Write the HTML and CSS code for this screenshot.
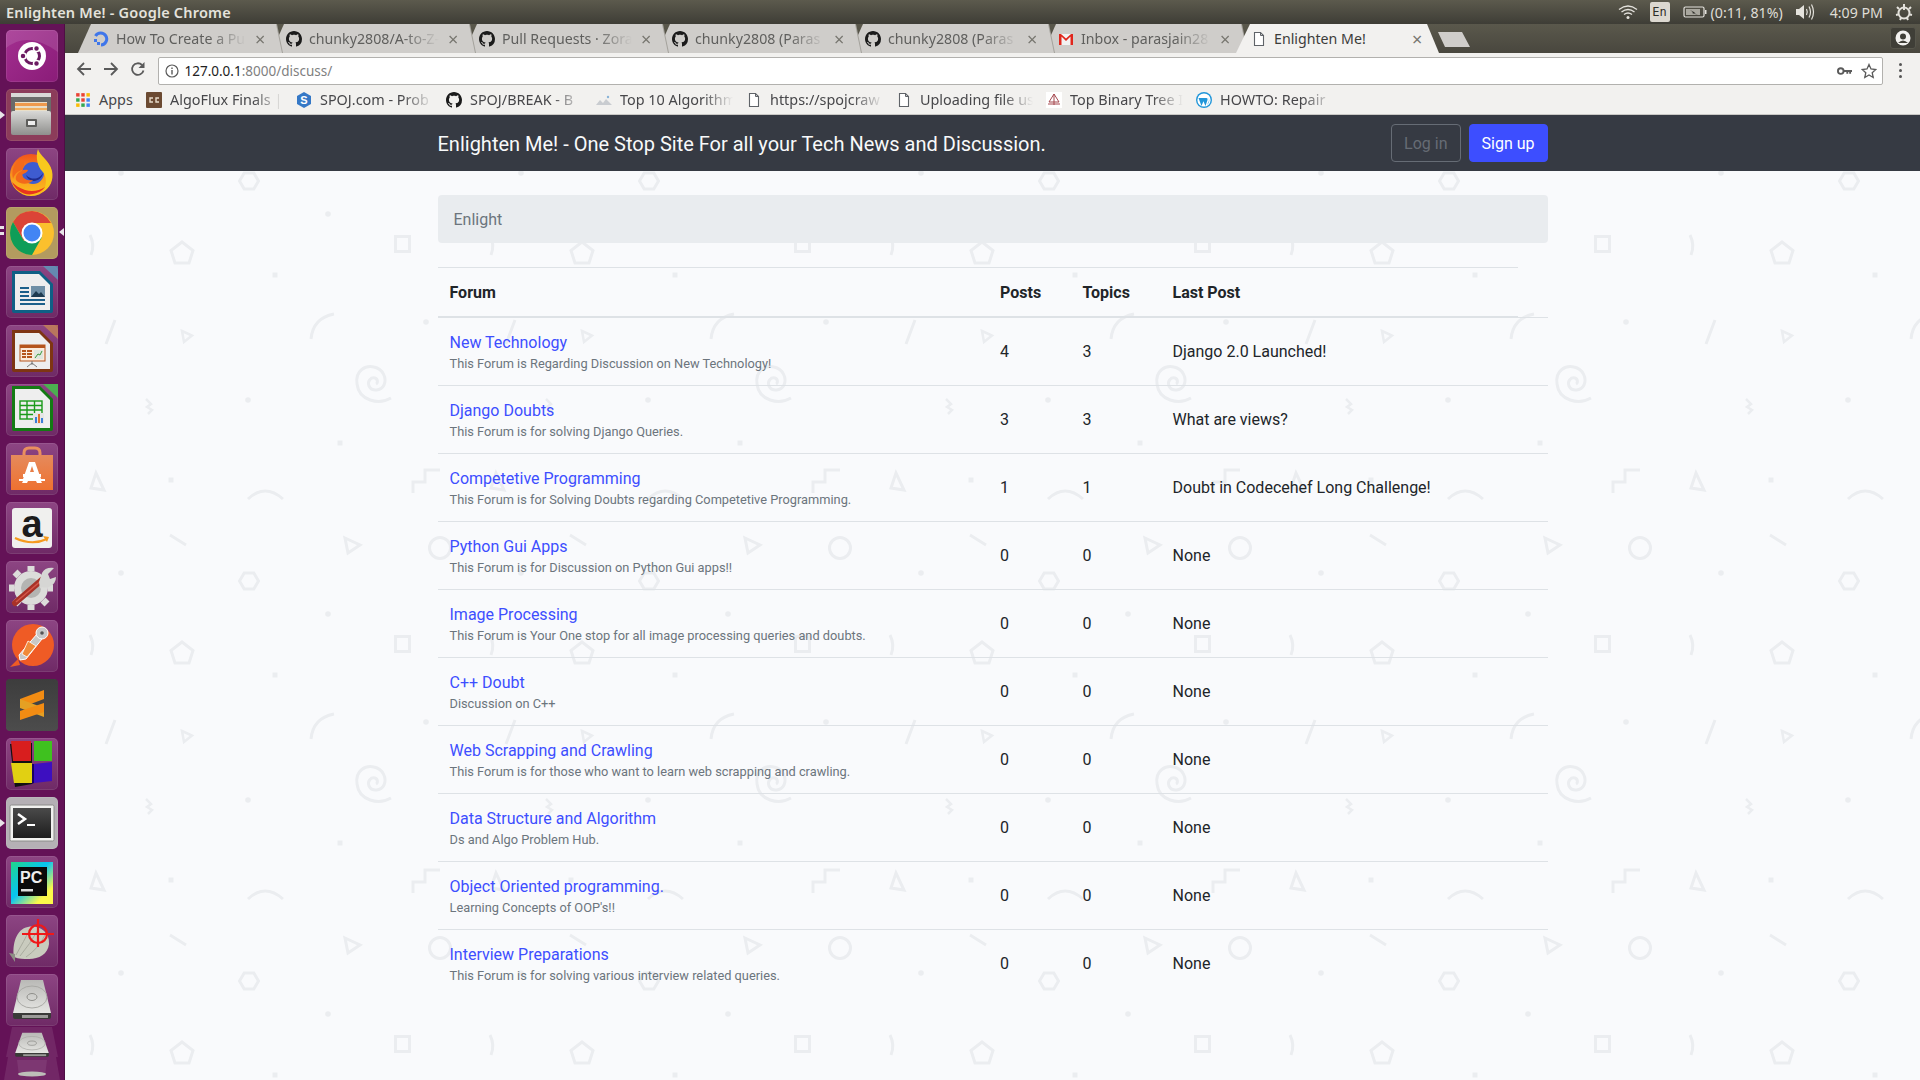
FILE: index.html
```html
<!DOCTYPE html>
<html lang="en">
<head>
<meta charset="utf-8">
<title>Enlighten Me!</title>
<link rel="stylesheet" href="styles.css">
</head>
<body>
<svg class="defs" width="0" height="0" aria-hidden="true">
  <defs>
    <symbol id="gh" viewBox="0 0 16 16"><path fill="#1b1b1b" d="M8 0C3.58 0 0 3.58 0 8c0 3.54 2.29 6.53 5.47 7.59.4.07.55-.17.55-.38 0-.19-.01-.82-.01-1.49-2.01.37-2.53-.49-2.69-.94-.09-.23-.48-.94-.82-1.13-.28-.15-.68-.52-.01-.53.63-.01 1.08.58 1.23.82.72 1.21 1.87.87 2.33.66.07-.52.28-.87.51-1.07-1.78-.2-3.64-.89-3.64-3.95 0-.87.31-1.59.82-2.15-.08-.2-.36-1.02.08-2.12 0 0 .67-.21 2.2.82.64-.18 1.32-.27 2-.27.68 0 1.36.09 2 .27 1.53-1.04 2.2-.82 2.2-.82.44 1.1.16 1.92.08 2.12.51.56.82 1.27.82 2.15 0 3.07-1.87 3.75-3.65 3.95.29.25.54.73.54 1.48 0 1.07-.01 1.93-.01 2.2 0 .21.15.46.55.38A8.013 8.013 0 0016 8c0-4.42-3.58-8-8-8z"/></symbol>
    <symbol id="doc" viewBox="0 0 16 16"><path fill="#fff" stroke="#5f6368" stroke-width="1.1" d="M3.5 1.5h6l3 3v10h-9z"/><path fill="none" stroke="#5f6368" stroke-width="1" d="M9.5 1.5v3h3"/></symbol>
    <symbol id="pic" viewBox="0 0 16 16"><path fill="#c9ccd0" d="M0 13l4-5 3 3 3-4 6 6z"/><circle cx="12" cy="5" r="1.2" fill="#8ab4d8"/></symbol>
    <symbol id="hdd" viewBox="0 0 52 52"><path fill="url(#gDisk)" d="M15 6h22l8 33H7z"/><ellipse cx="26" cy="23" rx="15" ry="11" fill="none" stroke="#a9a9a5" stroke-width="1"/><ellipse cx="26" cy="23" rx="5" ry="3.5" fill="none" stroke="#8f8f8b" stroke-width="1"/><path fill="#3a3a38" d="M7 39h38v4a2 2 0 0 1-2 2H9a2 2 0 0 1-2-2z"/><path fill="#9b9b98" d="M16 41h26v3H16z"/></symbol>
    <linearGradient id="gDisk" x1="0" y1="0" x2="0" y2="1"><stop offset="0" stop-color="#b9b9b6"/><stop offset="1" stop-color="#e6e6e3"/></linearGradient>
    <linearGradient id="gFile" x1="0" y1="0" x2="0" y2="1"><stop offset="0" stop-color="#d8d8d6"/><stop offset="1" stop-color="#8f8f8d"/></linearGradient>
    <linearGradient id="gBag" x1="0" y1="0" x2="0" y2="1"><stop offset="0" stop-color="#e58a5c"/><stop offset="1" stop-color="#ee7130"/></linearGradient>
    <linearGradient id="gPc" x1="0" y1="0" x2="1" y2="1"><stop offset="0" stop-color="#21d789"/><stop offset=".45" stop-color="#07c3f2"/><stop offset=".8" stop-color="#fcf84a"/><stop offset="1" stop-color="#fcf84a"/></linearGradient>
    <linearGradient id="gTerm" x1="0" y1="0" x2="0" y2="1"><stop offset="0" stop-color="#4a4a4a"/><stop offset="1" stop-color="#1d1d1d"/></linearGradient>
    <linearGradient id="gFox" x1="0" y1="0" x2="0" y2="1"><stop offset="0" stop-color="#f2541b"/><stop offset=".6" stop-color="#f9a01e"/><stop offset="1" stop-color="#fcc21c"/></linearGradient>
    <pattern id="doodles" patternUnits="userSpaceOnUse" x="0" y="46" width="400" height="400">
      <g transform="translate(-65 -161)" fill="none" stroke="#ebedf0" stroke-width="3">
        <g fill="#ebedf0" stroke="none">
          <circle cx="121" cy="173" r="2.8"/><circle cx="328" cy="214" r="2.8"/><circle cx="426" cy="322" r="2.8"/><circle cx="248" cy="400" r="2.8"/>
          <rect x="272.5" y="272.5" width="5" height="5"/><rect x="337.5" y="440.5" width="5" height="5"/><rect x="168.5" y="477.5" width="5" height="5"/>
        </g>
        <path d="M239.500 181l4.700-8h9.600l4.700 8-4.700 8h-9.600z"/>
        <path d="M90 235q5 10 1 20"/>
        <path d="M182 242l11 8.500-4 12.500h-14l-4-12.500z"/>
        <rect x="395.500" y="236.500" width="14" height="15"/>
        <path d="M115 320l-9 24"/>
        <path d="M182 331l10 4.500-8 6.500z" stroke-width="2.500"/>
        <path d="M311 339q2-21 23-25"/>
        <path d="M391 398c-12 7-32 3-34-14-2-14 9-19 17-17 9 2 13 11 10 18-3 6-12 7-15 1-2-5 2-9 6-8 3 1 3 5 1 6"/>
        <path d="M146 399l5 5-4 3 5 3-4 4" stroke-width="2.500"/>
        <path d="M96 473l-5 15 13 2z"/>
        <path d="M413 493v-11h12v-12h15"/>
        <path d="M248 499q17-16 35 0"/>
        <path d="M170 535l16 10"/>
        <path d="M345 538l15 7-12 8z"/>
        <circle cx="440" cy="548" r="10.500"/>
      </g>
    </pattern>
  </defs>
</svg>

<header class="panel">
  <div class="panel-title">Enlighten Me! - Google Chrome</div>
  <div class="tray">
    <svg class="tray-wifi" width="20" height="16" viewBox="0 0 20 16"><g fill="none" stroke="#e4e2dc" stroke-width="1.300"><path d="M1 5.500q9-7 18 0"/><path d="M3.500 8q6.500-5 13 0"/><path d="M6 10.500q4-3 8 0"/></g><circle cx="10" cy="13.500" r="1.500" fill="#e4e2dc"/></svg>
    <span class="tray-lang">En</span>
    <span class="tray-batt">
      <svg width="24" height="14" viewBox="0 0 24 14"><rect x="1" y="2" width="20" height="10" rx="1.500" fill="none" stroke="#e4e2dc" stroke-width="1.200"/><rect x="3" y="4" width="14" height="6" fill="#a9a79e"/><rect x="22" y="5" width="1.500" height="4" fill="#e4e2dc"/><path d="M7 5l5 2.500-1 .5 4 2-6-2 1-.8z" fill="#2f2e2a"/></svg>
      <span>(0:11, 81%)</span>
    </span>
    <svg class="tray-vol" width="20" height="18" viewBox="0 0 20 18"><path fill="#e4e2dc" d="M1 6h3l5-4v14l-5-4H1z"/><g fill="none" stroke="#e4e2dc" stroke-width="1.200"><path d="M11.500 6q1.500 3 0 6"/><path d="M14 3.500q3 5.500 0 11"/><path d="M16.500 1.500q4 7.500 0 15"/></g></svg>
    <span class="tray-time">4:09 PM</span>
    <svg class="tray-gear" width="18" height="18" viewBox="0 0 18 18"><circle cx="9" cy="10" r="5.500" fill="none" stroke="#e4e2dc" stroke-width="2"/><path stroke="#e4e2dc" stroke-width="2" d="M9 1v6M2 4l2 2M16 4l-2 2M1 12l2-.5M17 12l-2-.5M5 17l1-2M13 17l-1-2"/></svg>
  </div>
</header>

<div class="desktop">
  <nav class="launcher">
    <i class="pip pip-files"></i><i class="pip pip-chrome"></i><i class="pip pip-chrome2"></i><i class="pip pip-term"></i><i class="pip-active"></i>
    <div class="tile tile-ubuntu"><svg viewBox="0 0 52 52"><path fill="#fff" opacity=".12" d="M0 18q22-18 52 4V5a5 5 0 0 0-5-5H5a5 5 0 0 0-5 5z"/><circle cx="26" cy="26" r="14" fill="#fff"/><circle cx="26" cy="26" r="7.500" fill="none" stroke="#6b1a61" stroke-width="3"/><g fill="#6b1a61" stroke="#fff" stroke-width="1.500"><circle cx="17" cy="26" r="3"/><circle cx="30.500" cy="18.500" r="3"/><circle cx="30.500" cy="33.500" r="3"/></g></svg></div>
    <div class="tile tile-files"><svg viewBox="0 0 52 52"><rect x="5" y="4" width="40" height="20" rx="2" fill="#6b6b69"/><rect x="5" y="4" width="40" height="4" fill="#d9d9d6"/><rect x="9" y="13" width="32" height="10" fill="#e9dfc9"/><rect x="9" y="14" width="32" height="3" fill="#ee9a4d"/><rect x="9" y="19" width="32" height="2" fill="#f0b061"/><rect x="5" y="22" width="40" height="24" rx="2" fill="url(#gFile)"/><rect x="20" y="30" width="11" height="8" rx="1" fill="#5d5d5b"/><rect x="22" y="32" width="7" height="4" fill="#eee"/></svg></div>
    <div class="tile"><svg viewBox="0 0 52 52"><circle cx="25" cy="27" r="21" fill="url(#gFox)"/><circle cx="27" cy="25" r="11" fill="#3e5cd0"/><path fill="#1f2c8f" d="M20 27c6 6 14 4 17-2-1 8-13 12-17 2z"/><path fill="#f8c81e" d="M32 1c1 6 12 12 14 22 2 9-2 17-9 21 4-7 4-16-1-21-4-4-7-14-4-22z"/><path fill="#f36a1a" d="M17 11c-9 3-12 11-10 20 2-7 8-10 15-9-1 3-4 3-6 5 1 4 6 6 11 5-4 5-13 5-17 0-1-4 2-8 6-9 2-4 3-8 1-12z"/><path fill="#e8341f" d="M6 34c3 8 12 14 21 12 5-1 9-3 12-7-6 4-13 5-20 3-6-2-10-5-13-8z"/></svg></div>
    <div class="tile tile-chrome"><svg viewBox="0 0 52 52"><circle cx="26" cy="26" r="22" fill="#fbc02d"/><path fill="#db4437" d="M26 4a22 22 0 0 0-19 11l11 19 8-18h19A22 22 0 0 0 26 4z"/><path fill="#0f9d58" d="M7 15a22 22 0 0 0 19 33l10-18-18 4z"/><circle cx="26" cy="26" r="10.500" fill="#fff"/><circle cx="26" cy="26" r="8.500" fill="#4285f4"/></svg></div>
    <div class="tile"><svg viewBox="0 0 52 52"><path fill="#5b9bbd" d="M37 0h15v14z" opacity=".8"/><path fill="#0f5f85" d="M6 5h28l13 13v27a2 2 0 0 1-2 2H8a2 2 0 0 1-2-2z"/><path fill="#eee" d="M9 8h24l11 11v25H9z"/><g fill="#1b5f8a"><rect x="14" y="21" width="9" height="2"/><rect x="14" y="25" width="9" height="2"/><rect x="14" y="29" width="9" height="2"/><rect x="14" y="33" width="25" height="2"/><rect x="14" y="37" width="25" height="2"/></g><rect x="25" y="20" width="14" height="11" fill="#6f8fa6"/><path fill="#1d3a4f" d="M25 31l5-6 3 3 2-2 4 5z"/></svg></div>
    <div class="tile"><svg viewBox="0 0 52 52"><path fill="#c58355" d="M37 0h15v14z" opacity=".8"/><path fill="#7e3513" d="M6 5h28l13 13v27a2 2 0 0 1-2 2H8a2 2 0 0 1-2-2z"/><path fill="#eee" d="M9 8h24l11 11v25H9z"/><rect x="14" y="20" width="25" height="16" fill="#fbeadb" stroke="#b5541c" stroke-width="1"/><rect x="14" y="20" width="25" height="3" fill="#b5541c"/><g fill="#b5541c"><rect x="16" y="25" width="4" height="2"/><rect x="21" y="25" width="5" height="2"/><rect x="16" y="28" width="4" height="2"/><rect x="21" y="28" width="5" height="2"/><rect x="16" y="31" width="4" height="2"/><rect x="21" y="31" width="5" height="2"/></g><rect x="28" y="25" width="9" height="9" fill="#dfe6df"/><path d="M29 33l3-4 2 1 2-4" fill="none" stroke="#3c9a3c" stroke-width="1"/><path d="M26 36v4M26 38l-5 4M26 38l5 4" stroke="#777" stroke-width="1"/></svg></div>
    <div class="tile"><svg viewBox="0 0 52 52"><path fill="#4caf50" d="M37 0h15v14z"/><path fill="#147a14" d="M6 2h28l13 13v30a2 2 0 0 1-2 2H8a2 2 0 0 1-2-2z"/><path fill="#eee" d="M9 5h24l11 11v28H9z"/><g fill="none" stroke="#1a9a1a" stroke-width="1.400"><rect x="14" y="17" width="22" height="18"/><path d="M14 21.500h22M14 26h22M14 30.500h22M21 17v18M28.500 17v18"/></g><rect x="27" y="29" width="11" height="11" fill="#e5e5e5"/><rect x="29" y="33" width="2" height="6" fill="#3b7dd8"/><rect x="32" y="30" width="2" height="9" fill="#e2722c"/><rect x="35" y="34" width="2" height="5" fill="#3b7dd8"/></svg></div>
    <div class="tile"><svg viewBox="0 0 52 52"><path fill="none" stroke="#e98f5f" stroke-width="3" d="M18 15v-5q0-5 5-5h6q5 0 5 5v5"/><path fill="url(#gBag)" d="M5 12h42v35H5z"/><path fill="#fff" d="M23 19h6l6 17h4v2H13v-2h4zm3 4l-2 6h4zM17 31h18v3H17zM16 40h5l1-2h-5zM31 40h5l-1-2h-5z"/></svg></div>
    <div class="tile"><svg viewBox="0 0 52 52"><rect x="6" y="6" width="40" height="40" rx="3" fill="#f0f0ee"/><text class="amz" x="26" y="35" text-anchor="middle">a</text><path d="M9 36q17 8 32 1" fill="none" stroke="#f59a1e" stroke-width="2.200"/><path d="M37 34l6 1-2 5z" fill="#f59a1e"/></svg></div>
    <div class="tile"><svg viewBox="0 0 52 52"><circle cx="25" cy="27" r="17" fill="#dcdcda"/><circle cx="25" cy="27" r="10" fill="#b4b4b2"/><g stroke="#dcdcda" stroke-width="7"><path d="M25 5v5M25 44v5M3 27h5M42 27h5M9 11l4 4M37 39l4 4M13 39l-4 4"/></g><path d="M9 42L38 17" stroke="#a83228" stroke-width="6" stroke-linecap="round"/><path d="M10 41L36 19" stroke="#d4574a" stroke-width="1.500"/><path fill="#d6d6d4" d="M33 21l3-9q3-6 12-5l-6 6 2 5 6-2q0 7-7 10-5 1-7 0l-2 2z"/></svg></div>
    <div class="tile"><svg viewBox="0 0 52 52"><circle cx="27" cy="25" r="21" fill="#ef5b25"/><path fill="#c8c8c8" stroke="#fff" stroke-width="1" d="M31 14l5 5-16 20-6 1-1-5z"/><path fill="#f08a3a" stroke="#fff" stroke-width=".8" d="M22 21l8 5-9 11-5-3z"/><circle cx="36" cy="13" r="6" fill="#c8c8c8" stroke="#fff" stroke-width="1"/><circle cx="36" cy="13" r="1.800" fill="#555"/><path fill="#ef5b25" d="M4 47l8-8 2 6z"/></svg></div>
    <div class="tile tile-dark"><svg viewBox="0 0 52 52"><path fill="#f28c13" d="M14 20l24-9v9l-24 9z"/><path fill="#e5a023" d="M14 20l24 9v9L14 29z"/><path fill="#f28c13" d="M14 32l24-8v9l-24 8z"/></svg></div>
    <div class="tile"><svg viewBox="0 0 52 52"><path fill="#111" d="M4 6l22-1v41L9 49z"/><path fill="#d81e1e" d="M5 3h20v20H7z"/><path fill="#3fc11f" d="M28 3h18v20H28z"/><path fill="#e1d012" d="M5 25h21v20H8z"/><path fill="#3d0fc0" d="M28 26l18-2v19l-18 2z"/><path fill="#1a0066" d="M26 26l2 0v19l-2 1z"/></svg></div>
    <div class="tile tile-term"><svg viewBox="0 0 52 52"><rect x="4" y="8" width="44" height="36" rx="1.500" fill="#f1f1ef" stroke="#8c8c8a"/><rect x="7" y="11" width="38" height="30" fill="url(#gTerm)"/><path d="M12 17l7 5-7 5" fill="none" stroke="#fff" stroke-width="2.500"/><rect x="21" y="27" width="8" height="2" fill="#fff"/></svg></div>
    <div class="tile"><svg viewBox="0 0 52 52"><rect x="5" y="6" width="42" height="42" fill="url(#gPc)"/><rect x="12" y="11" width="29" height="29" fill="#0a0a0a"/><text class="pc" x="14" y="27">PC</text><rect x="15" y="33" width="12" height="2.500" fill="#ddd"/></svg></div>
    <div class="tile"><svg viewBox="0 0 52 52"><path fill="#c9cbbe" d="M8 42c-2-12 2-28 14-30 10-2 22 4 21 17-1 10-10 15-20 15-6 0-10 0-15-2z"/><g fill="none" stroke="#a9ab9f" stroke-width="1"><path d="M10 40q8-14 14-26M14 41q10-12 18-26M20 42q12-8 19-22"/></g><path fill="#8e9085" d="M3 38l6 1v8z"/><g fill="none" stroke="#f01818" stroke-width="2.200"><circle cx="32" cy="19" r="9"/><path d="M32 4v28M16 19h32"/></g></svg></div>
    <div class="tile"><svg viewBox="0 0 52 52"><use href="#hdd"/></svg></div>
    <div class="tile tile-trash"><svg viewBox="0 0 52 53" preserveAspectRatio="none"><path d="M6 0h40l6 30H0z" fill="#fff" opacity=".09"/><path d="M2 30h48l4 23H-2z" fill="#fff" opacity=".09"/><svg x="3" y="2" width="46" height="32" viewBox="0 0 52 52" preserveAspectRatio="none"><use href="#hdd"/></svg><path d="M11 33h30l-2 16H13z" fill="#fff" opacity=".08"/><ellipse cx="26" cy="47" rx="14" ry="2.500" fill="#bdbdb8"/></svg></div>
  </nav>

  <div class="browser">
    <div class="tabstrip">
      <div class="tab"><div class="tab-shape">
        <svg class="ico" viewBox="0 0 16 16"><path fill="none" stroke="#3f76ea" stroke-width="3" d="M8 14A6 6 0 1 0 2.500 5"/><path fill="#3f76ea" d="M1 8h3v3H1zM4 11h3v3H4z"/></svg>
        <span class="tab-label">How To Create a Pu</span><span class="tab-x">×</span>
      </div></div>
      <div class="tab"><div class="tab-shape">
        <svg class="ico"><use href="#gh"/></svg>
        <span class="tab-label">chunky2808/A-to-Z-</span><span class="tab-x">×</span>
      </div></div>
      <div class="tab"><div class="tab-shape">
        <svg class="ico"><use href="#gh"/></svg>
        <span class="tab-label">Pull Requests · Zora</span><span class="tab-x">×</span>
      </div></div>
      <div class="tab"><div class="tab-shape">
        <svg class="ico"><use href="#gh"/></svg>
        <span class="tab-label">chunky2808 (Paras</span><span class="tab-x">×</span>
      </div></div>
      <div class="tab"><div class="tab-shape">
        <svg class="ico"><use href="#gh"/></svg>
        <span class="tab-label">chunky2808 (Paras</span><span class="tab-x">×</span>
      </div></div>
      <div class="tab"><div class="tab-shape">
        <svg class="ico" viewBox="0 0 16 16"><rect x="1" y="3" width="14" height="11" fill="#f2f2f2"/><path fill="#e0261c" d="M1 3h2.500v11H1zM12.500 3H15v11h-2.500zM1 3h2l5 4.500L13 3h2L8 10z"/></svg>
        <span class="tab-label">Inbox - parasjain28</span><span class="tab-x">×</span>
      </div></div>
      <div class="tab tab-active"><div class="tab-shape">
        <svg class="ico"><use href="#doc"/></svg>
        <span class="tab-label">Enlighten Me!</span><span class="tab-x">×</span>
      </div></div>
      <div class="newtab"></div>
      <div class="profile"><svg width="16" height="16" viewBox="0 0 16 16"><circle cx="8" cy="8" r="7.500" fill="#f2f1ef"/><circle cx="8" cy="6.500" r="3" fill="#3f3e37"/><path d="M3 13q5-5 10 0" fill="#3f3e37"/></svg></div>
    </div>

    <div class="toolbar">
      <svg class="tb-ico" viewBox="0 0 16 16"><path fill="none" stroke="#5a5a5a" stroke-width="1.800" d="M15 8H2M8 2L2 8l6 6"/></svg>
      <svg class="tb-ico" viewBox="0 0 16 16"><path fill="none" stroke="#5a5a5a" stroke-width="1.800" d="M1 8h13M8 2l6 6-6 6"/></svg>
      <svg class="tb-ico" viewBox="0 0 16 16"><path fill="none" stroke="#5a5a5a" stroke-width="1.800" d="M13.500 9.500A5.800 5.800 0 1 1 12 4"/><path fill="#5a5a5a" d="M14.500 1v6h-6z"/></svg>
      <div class="omnibox">
        <svg class="omni-info" viewBox="0 0 14 14"><circle cx="7" cy="7" r="6" fill="none" stroke="#5a5a5a" stroke-width="1.200"/><rect x="6.300" y="6" width="1.400" height="4.500" fill="#5a5a5a"/><rect x="6.300" y="3.500" width="1.400" height="1.500" fill="#5a5a5a"/></svg>
        <span class="url"><span class="url-host">127.0.0.1</span>:8000/discuss/</span>
        <svg class="omni-key" viewBox="0 0 16 10"><circle cx="4" cy="5" r="3" fill="none" stroke="#5a5a5a" stroke-width="2"/><path fill="#5a5a5a" d="M7 4h9v2h-1v2h-2V6h-1v2h-2V6H7z"/></svg>
        <svg class="omni-star" viewBox="0 0 16 16"><path fill="none" stroke="#5a5a5a" stroke-width="1.300" d="M8 1.500l2 4.500 4.800.5-3.600 3.200 1 4.800L8 12l-4.200 2.500 1-4.800L1.200 6.500 6 6z"/></svg>
      </div>
      <div class="dots"><i></i><i></i><i></i></div>
    </div>

    <div class="bookmarks">
      <div class="bm bm-apps">
        <svg class="ico" viewBox="0 0 14 14"><g fill="#ea4335"><rect x="1" y="1" width="3" height="3"/><rect x="5.500" y="1" width="3" height="3"/></g><rect x="10" y="1" width="3" height="3" fill="#fbbc05"/><rect x="1" y="5.500" width="3" height="3" fill="#34a853"/><rect x="5.500" y="5.500" width="3" height="3" fill="#ea4335"/><rect x="10" y="5.500" width="3" height="3" fill="#4285f4"/><rect x="1" y="10" width="3" height="3" fill="#fbbc05"/><rect x="5.500" y="10" width="3" height="3" fill="#34a853"/><rect x="10" y="10" width="3" height="3" fill="#4285f4"/></svg>
        <span>Apps</span>
      </div>
      <div class="bm"><svg class="ico" viewBox="0 0 16 16"><rect width="16" height="16" rx="1" fill="#6b4a32"/><path fill="none" stroke="#e8dccb" stroke-width="1.400" d="M7 6H4v4h3M13 6h-3v4h3"/></svg><span class="bm-label">AlgoFlux Finals |</span></div>
      <div class="bm"><svg class="ico" viewBox="0 0 16 16"><path fill="#3578c6" d="M8 0l7 4v8l-7 4-7-4V4z"/><text class="sp" x="8" y="12" text-anchor="middle">S</text></svg><span class="bm-label">SPOJ.com - Prob</span></div>
      <div class="bm"><svg class="ico"><use href="#gh"/></svg><span class="bm-label">SPOJ/BREAK - B</span></div>
      <div class="bm"><svg class="ico"><use href="#pic"/></svg><span class="bm-label">Top 10 Algorithm</span></div>
      <div class="bm"><svg class="ico"><use href="#doc"/></svg><span class="bm-label">https://spojcraw</span></div>
      <div class="bm"><svg class="ico"><use href="#doc"/></svg><span class="bm-label">Uploading file us</span></div>
      <div class="bm"><svg class="ico" viewBox="0 0 16 16"><rect width="16" height="16" fill="#fff"/><path fill="none" stroke="#a5484f" stroke-width="1" d="M8 2L3 10h10zM8 2v11M2 12h12"/></svg><span class="bm-label">Top Binary Tree I</span></div>
      <div class="bm"><svg class="ico" viewBox="0 0 16 16"><circle cx="8" cy="8" r="8" fill="#2196d9"/><circle cx="8" cy="8" r="6.600" fill="#fff"/><path fill="#2196d9" d="M2.500 6l3 8 2-5-1.200-3zM6 6l3.500 8 2-6q.5-2-1-2zM12 5q2 3 0 6l-1 2q4-4 1-8z"/></svg><span class="bm-label">HOWTO: Repair</span></div>
    </div>

    <div class="page">
      <svg class="doodles" width="100%" height="100%" aria-hidden="true"><rect width="100%" height="100%" fill="url(#doodles)"/></svg>
      <div class="topbar">
        <div class="container topbar-inner">
          <div class="brand">Enlighten Me! - One Stop Site For all your Tech News and Discussion.</div>
          <div class="actions">
            <a class="btn btn-ghost">Log in</a>
            <a class="btn btn-primary">Sign up</a>
          </div>
        </div>
      </div>
      <main class="container content">
        <div class="search">Enlight</div>
        <div class="forum-head">
          <div>Forum</div><div>Posts</div><div>Topics</div><div>Last Post</div>
        </div>
        <div class="forum-row">
          <div><a class="forum-name">New Technology</a><div class="forum-desc">This Forum is Regarding Discussion on New Technology!</div></div>
          <div>4</div><div>3</div><div>Django 2.0 Launched!</div>
        </div>
        <div class="forum-row">
          <div><a class="forum-name">Django Doubts</a><div class="forum-desc">This Forum is for solving Django Queries.</div></div>
          <div>3</div><div>3</div><div>What are views?</div>
        </div>
        <div class="forum-row">
          <div><a class="forum-name">Competetive Programming</a><div class="forum-desc">This Forum is for Solving Doubts regarding Competetive Programming.</div></div>
          <div>1</div><div>1</div><div>Doubt in Codecehef Long Challenge!</div>
        </div>
        <div class="forum-row">
          <div><a class="forum-name">Python Gui Apps</a><div class="forum-desc">This Forum is for Discussion on Python Gui apps!!</div></div>
          <div>0</div><div>0</div><div>None</div>
        </div>
        <div class="forum-row">
          <div><a class="forum-name">Image Processing</a><div class="forum-desc">This Forum is Your One stop for all image processing queries and doubts.</div></div>
          <div>0</div><div>0</div><div>None</div>
        </div>
        <div class="forum-row">
          <div><a class="forum-name">C++ Doubt</a><div class="forum-desc">Discussion on C++</div></div>
          <div>0</div><div>0</div><div>None</div>
        </div>
        <div class="forum-row">
          <div><a class="forum-name">Web Scrapping and Crawling</a><div class="forum-desc">This Forum is for those who want to learn web scrapping and crawling.</div></div>
          <div>0</div><div>0</div><div>None</div>
        </div>
        <div class="forum-row">
          <div><a class="forum-name">Data Structure and Algorithm</a><div class="forum-desc">Ds and Algo Problem Hub.</div></div>
          <div>0</div><div>0</div><div>None</div>
        </div>
        <div class="forum-row">
          <div><a class="forum-name">Object Oriented programming.</a><div class="forum-desc">Learning Concepts of OOP's!!</div></div>
          <div>0</div><div>0</div><div>None</div>
        </div>
        <div class="forum-row forum-row-last">
          <div><a class="forum-name">Interview Preparations</a><div class="forum-desc">This Forum is for solving various interview related queries.</div></div>
          <div>0</div><div>0</div><div>None</div>
        </div>
      </main>
    </div>
  </div>
</div>
</body>
</html>
```

FILE: styles.css
```css
* { box-sizing: border-box; }
html, body { margin: 0; height: 100%; overflow: hidden; }
body {
  display: flex;
  flex-direction: column;
  width: 1920px;
  height: 1080px;
  font-family: Roboto, sans-serif;
  font-size: 16px;
  color: #212529;
  background: #f9fafc;
}
.defs { position: absolute; }

/* top system panel */
.panel {
  height: 24px;
  flex: none;
  display: flex;
  align-items: center;
  justify-content: space-between;
  padding: 0 7px 0 6px;
  background: linear-gradient(#5c5a4d, #3e3d36);
  color: #e9e7e1;
  font-family: "Noto Sans", sans-serif;
  font-size: 13px;
}
.panel-title { font-weight: 600; font-size: 14.5px; letter-spacing: .2px; color: #e4e2dc; }
.tray { display: flex; align-items: center; color: #dfddd6; font-size: 14.2px; }
.tray-lang {
  width: 20px;
  height: 20px;
  margin: 0 13px 0 12px;
  background: #dcd8d0;
  border-radius: 2px;
  color: #2f2e2a;
  font: 12px/20px "DejaVu Sans Mono", monospace;
  text-align: center;
}
.tray-batt { display: flex; align-items: center; gap: 4px; margin-right: 12px; }
.tray-time { margin: 0 12px 0 15px; }
.tray-gear { display: block; }

/* desktop */
.desktop { flex: 1; display: flex; min-height: 0; }
.launcher {
  position: relative;
  width: 65px;
  flex: none;
  display: flex;
  flex-direction: column;
  gap: 7px;
  padding: 6px 7px 0 6px;
  background: #641257;
  border-right: 1px solid #4e0e44;
  overflow: hidden;
}
.tile {
  width: 52px;
  height: 52px;
  flex: none;
  border-radius: 5px;
  background: linear-gradient(#8d4583, #6f2a66);
  box-shadow: inset 0 0 0 1px rgba(255,255,255,.09);
}
.tile > svg { display: block; width: 52px; height: 52px; overflow: visible; }
.tile-ubuntu { background: linear-gradient(135deg, #a32f90, #8a1c78); }
.tile-files { background: #8c3c5a; }
.tile-chrome { background: #b39b5f; }
.tile-dark { background: linear-gradient(#5c3f5a, #6f2a66); }
.tile-dark > svg { background: linear-gradient(#3d3d3d, #4c4c4c); border-radius: 4px; }
.tile-term { background: #b5b0b5; }
.tile-trash { height: 53px; margin-top: -6px; background: none; box-shadow: none; }
.tile-trash > svg { height: 53px; }
.pip, .pip-active { position: absolute; z-index: 1; width: 0; height: 0; }
.pip { left: 0; border-left: 5px solid #e8e4e8; border-top: 4px solid transparent; border-bottom: 4px solid transparent; }
.pip-files { top: 87px; }
.pip-chrome { top: 202px; border: 0; width: 4px; height: 3px; background: #e8e4e8; }
.pip-chrome2 { top: 208px; border: 0; width: 4px; height: 3px; background: #e8e4e8; }
.pip-term { top: 795px; }
.pip-active { top: 204px; right: 0; border-right: 5px solid #e8e4e8; border-top: 4px solid transparent; border-bottom: 4px solid transparent; }

/* chrome */
.browser { flex: 1; min-width: 0; display: flex; flex-direction: column; }
.ico { width: 16px; height: 16px; flex: none; display: block; }
.tabstrip {
  height: 29px;
  flex: none;
  display: flex;
  padding-left: 13px;
  background: linear-gradient(#5a584c, #49473e);
  font-family: "Noto Sans", sans-serif;
  font-size: 14.2px;
  position: relative;
}
.tab {
  width: 204px;
  margin-right: -11px;
  flex: none;
  filter: drop-shadow(1px 0 0 #a3a19b);
  position: relative;
}
.tab:nth-child(1) { z-index: 6; }
.tab:nth-child(2) { z-index: 5; }
.tab:nth-child(3) { z-index: 4; }
.tab:nth-child(4) { z-index: 3; }
.tab:nth-child(5) { z-index: 2; }
.tab:nth-child(6) { z-index: 1; }
.tab-active { z-index: 7; width: 203px; filter: none; }
.tab-shape {
  height: 100%;
  display: flex;
  align-items: center;
  padding: 0 17px 0 15px;
  background: #cfcdca;
  clip-path: polygon(13px 0, calc(100% - 6px) 0, 100% 100%, 0 100%);
  color: #5f5f5d;
}
.tab-active .tab-shape {
  background: #f2f1ef;
  color: #3c3c3a;
  clip-path: polygon(14px 0, calc(100% - 12px) 0, 100% 100%, 0 100%);
  padding-left: 15px;
}
.tab-label {
  flex: 1;
  min-width: 0;
  margin-left: 7px;
  white-space: nowrap;
  -webkit-mask-image: linear-gradient(90deg, #000 72%, transparent 100%);
  mask-image: linear-gradient(90deg, #000 72%, transparent 100%);
}
.tab-active .tab-label { -webkit-mask-image: none; mask-image: none; }
.tab-x { width: 10px; margin-left: 9px; color: #77766f; font-size: 18px; line-height: 1; text-align: center; }
.newtab {
  width: 32px;
  height: 15px;
  margin: 8px 0 0 10px;
  flex: none;
  background: #cfcdca;
  clip-path: polygon(0 0, 24px 0, 100% 100%, 7px 100%);
}
.profile {
  position: absolute;
  right: 4px;
  top: 3px;
  width: 26px;
  height: 22px;
  display: flex;
  align-items: center;
  justify-content: center;
  background: #3f3e37;
  border: 1px solid #56554b;
  border-radius: 3px;
}

.toolbar {
  height: 32px;
  flex: none;
  display: flex;
  align-items: center;
  padding-left: 11px;
  background: #f2f1ef;
}
.tb-ico { width: 16px; height: 16px; flex: none; margin-right: 11px; display: block; }
.tb-ico:nth-child(3) { margin-right: 11.500px; }
.omnibox {
  width: 1725.500px;
  height: 28px;
  margin-top: 3px;
  display: flex;
  align-items: center;
  padding: 0 5px 0 6px;
  background: #fff;
  border: 1px solid #b2b1ae;
  border-radius: 2px;
  font-family: "Noto Sans", sans-serif;
  font-size: 13.5px;
}
.omni-info { width: 14px; height: 14px; flex: none; }
.url { flex: 1; margin-left: 6px; color: #7f7f7f; }
.url-host { color: #222; }
.omni-key { width: 15px; height: 10px; flex: none; margin-right: 9px; }
.omni-star { width: 16px; height: 16px; flex: none; }
.dots { display: flex; flex-direction: column; gap: 3px; margin: 3px 0 0 16px; }
.dots i { width: 3px; height: 3px; border-radius: 50%; background: #555; display: block; }

.bookmarks {
  height: 30px;
  flex: none;
  display: flex;
  align-items: center;
  padding-left: 10px;
  background: #f2f1ef;
  border-bottom: 1px solid #c9c8c5;
  font-family: "Noto Sans", sans-serif;
  font-size: 14.4px;
  color: #47474a;
}
.bm { width: 150px; flex: none; display: flex; align-items: center; gap: 8px; white-space: nowrap; }
.bm-apps { width: 71px; }
.bm-label {
  width: 118px;
  -webkit-mask-image: linear-gradient(90deg, #000 70%, transparent 96%);
  mask-image: linear-gradient(90deg, #000 70%, transparent 96%);
}

/* page */
.page { flex: 1; min-height: 0; position: relative; background: #f9fafc; }
.doodles { position: absolute; inset: 0; }
.topbar { position: relative; height: 56px; background: #363a43; }
.container { width: 1140px; margin: 0 auto; padding: 0 15px; position: relative; }
.topbar-inner { height: 100%; display: flex; align-items: center; justify-content: space-between; }
.brand { color: #f8f9fa; font-size: 20px; line-height: 30px; padding-top: 2px; }
.actions { display: flex; gap: 8px; }
.btn { height: 38px; padding: 0 12px; border-radius: 4px; line-height: 38px; border: 1px solid; }
.btn-ghost { color: #666c75; border-color: #666c75; }
.btn-primary { color: #fff; background: #3d4eff; border-color: #3d4eff; }
.content { padding-top: 24px; }
.search {
  height: 48px;
  margin-bottom: 24px;
  padding: 0 16px;
  background: #e9ecef;
  border-radius: 4px;
  line-height: 50px;
  color: #6c757d;
}
.forum-head, .forum-row {
  display: grid;
  grid-template-columns: 550.5px 82.5px 90px 1fr;
}
.forum-head {
  width: 1080px;
  height: 51px;
  border-top: 1px solid #dee2e6;
  border-bottom: 2px solid #dee2e6;
  align-items: center;
  font-weight: 700;
}
.forum-head > div, .forum-row > div { padding: 0 12px; }
.forum-row {
  height: 68px;
  align-items: center;
  border-bottom: 1px solid #dee2e6;
}
.forum-head + .forum-row { box-shadow: 0 -1px 0 #dee2e6; }
.forum-row-last { border-bottom-color: transparent; }
.forum-name { display: block; color: #3d4eff; line-height: 24px; padding-top: 1px; }
.forum-desc { color: #6c757d; font-size: 12.8px; line-height: 19px; margin-top: -1px; }

/* svg text */
.amz { font: 700 38px "Liberation Sans", sans-serif; fill: #1c1c1c; }
.pc { font: 700 16px "Liberation Sans", sans-serif; fill: #eee; }
.sp { font: 700 11px "Liberation Sans", sans-serif; fill: #fff; }
```
